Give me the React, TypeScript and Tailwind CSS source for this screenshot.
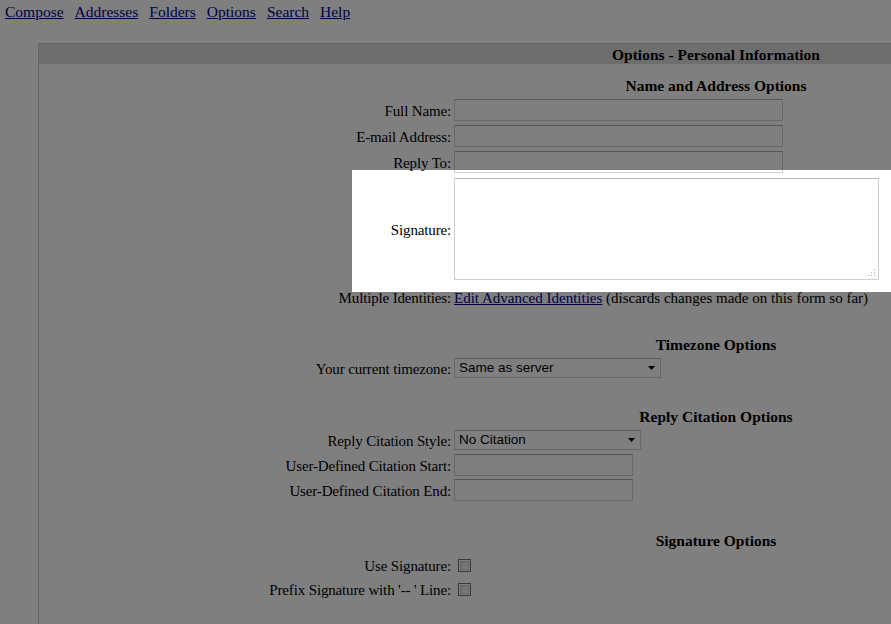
import React from "react";

const navLinks = ["Compose", "Addresses", "Folders", "Options", "Search", "Help"];

function Label({ children }: { children: React.ReactNode }) {
  return (
    <div className="w-[412px] shrink-0 text-right whitespace-nowrap text-[15px] tracking-[-0.15px] pt-[2px]">
      {children}
    </div>
  );
}

function TextBox({ w }: { w: string }) {
  return <div className={`${w} h-[22px] border border-[#d0d0d0] border-t-[#a9a9a9] bg-white`} />;
}

function Select({ w, value }: { w: string; value: string }) {
  return (
    <div
      className={`${w} h-[20px] border border-[#d0d0d0] border-t-[#b4b4b4] bg-white flex items-center justify-between pl-[4px] pr-[4px] font-['Liberation_Sans',Arial,sans-serif] text-[13.5px] leading-[18px]`}
    >
      <span>{value}</span>
      <svg width="7" height="4" viewBox="0 0 7 4" className="mr-[1px]">
        <path d="M0 0 L7 0 L3.5 4 Z" fill="#000" />
      </svg>
    </div>
  );
}

function CheckBox() {
  return (
    <div className="ml-[4px] w-[13px] h-[13px] border border-[#707070] bg-white p-[1px]">
      <div className="w-full h-full border border-[#c8c8c8] bg-gradient-to-br from-[#dcdcdc] to-[#f8f8f8]" />
    </div>
  );
}

function Section({ title, h }: { title: string; h: string }) {
  return <div className={`${h} flex items-center justify-center font-bold text-[15.5px]`}>{title}</div>;
}

export default function App() {
  return (
    <div className="relative w-[891px] h-[624px] overflow-hidden bg-white text-black font-['Liberation_Serif','Times_New_Roman',serif] text-[16px] leading-[18px]">
      <nav className="h-[43px] flex items-start gap-[11px] pl-[5px] pt-[3px] text-[15.5px]">
        {navLinks.map((l) => (
          <a key={l} href="#" className="text-[#00008b] underline">
            {l}
          </a>
        ))}
      </nav>

      <div className="ml-[38px] w-[1355px] border-l border-t border-[#c8c8c8]">
        <div className="h-[20px] bg-[#dcdcdc] flex items-center justify-center font-bold text-[15.5px] pt-[1px]">
          Options - Personal Information
        </div>

        <div className="h-[12px]" />
        <Section title="Name and Address Options" h="h-[20px]" />
        <div className="h-[1px]" />

        <div className="h-[26px] flex items-center gap-[3px]">
          <Label>Full Name:</Label>
          <TextBox w="w-[329px]" />
        </div>
        <div className="h-[26px] flex items-center gap-[3px]">
          <Label>E-mail Address:</Label>
          <TextBox w="w-[329px]" />
        </div>
        <div className="h-[26px] flex items-center gap-[3px]">
          <Label>Reply To:</Label>
          <TextBox w="w-[329px]" />
        </div>
        <div className="h-[108px] flex items-center gap-[3px]">
          <Label>Signature:</Label>
          <div className="relative w-[425px] h-[102px] border border-[#d0d0d0] border-t-[#b8b8b8] bg-white">
            <svg width="7" height="7" viewBox="0 0 7 7" className="absolute right-[3px] bottom-[3px]">
              <rect x="6" y="0" width="1" height="1" fill="#b0b0b0" />
              <rect x="3" y="3" width="1" height="1" fill="#b0b0b0" />
              <rect x="6" y="3" width="1" height="1" fill="#b0b0b0" />
              <rect x="0" y="6" width="1" height="1" fill="#b0b0b0" />
              <rect x="3" y="6" width="1" height="1" fill="#b0b0b0" />
              <rect x="6" y="6" width="1" height="1" fill="#b0b0b0" />
            </svg>
          </div>
        </div>
        <div className="h-[28px] flex items-center gap-[3px]">
          <Label>Multiple Identities:</Label>
          <div className="whitespace-nowrap text-[15px] pt-[2px]">
            <a href="#" className="text-[#00008b] underline">
              Edit Advanced Identities
            </a>{" "}
            (discards changes made on this form so far)
          </div>
        </div>

        <div className="h-[24px]" />
        <Section title="Timezone Options" h="h-[20px]" />
        <div className="h-[26px] flex items-center gap-[3px]">
          <Label>Your current timezone:</Label>
          <Select w="w-[207px]" value="Same as server" />
        </div>

        <div className="h-[26px]" />
        <Section title="Reply Citation Options" h="h-[20px]" />
        <div className="h-[26px] flex items-center gap-[3px]">
          <Label>Reply Citation Style:</Label>
          <Select w="w-[187px]" value="No Citation" />
        </div>
        <div className="h-[24px] flex items-center gap-[3px]">
          <Label>User-Defined Citation Start:</Label>
          <TextBox w="w-[179px]" />
        </div>
        <div className="h-[26px] flex items-center gap-[3px]">
          <Label>User-Defined Citation End:</Label>
          <TextBox w="w-[179px]" />
        </div>

        <div className="h-[28px]" />
        <Section title="Signature Options" h="h-[20px]" />
        <div className="h-[2px]" />
        <div className="h-[24px] flex items-center gap-[3px]">
          <Label>Use Signature:</Label>
          <CheckBox />
        </div>
        <div className="h-[24px] flex items-center gap-[3px]">
          <Label>Prefix Signature with '-- ' Line:</Label>
          <CheckBox />
        </div>
        <div className="h-[40px]" />
      </div>

      <div className="absolute left-[352px] top-[170px] w-[600px] h-[122px] shadow-[0_0_0_2000px_rgba(0,0,0,0.5)] pointer-events-none" />
    </div>
  );
}
